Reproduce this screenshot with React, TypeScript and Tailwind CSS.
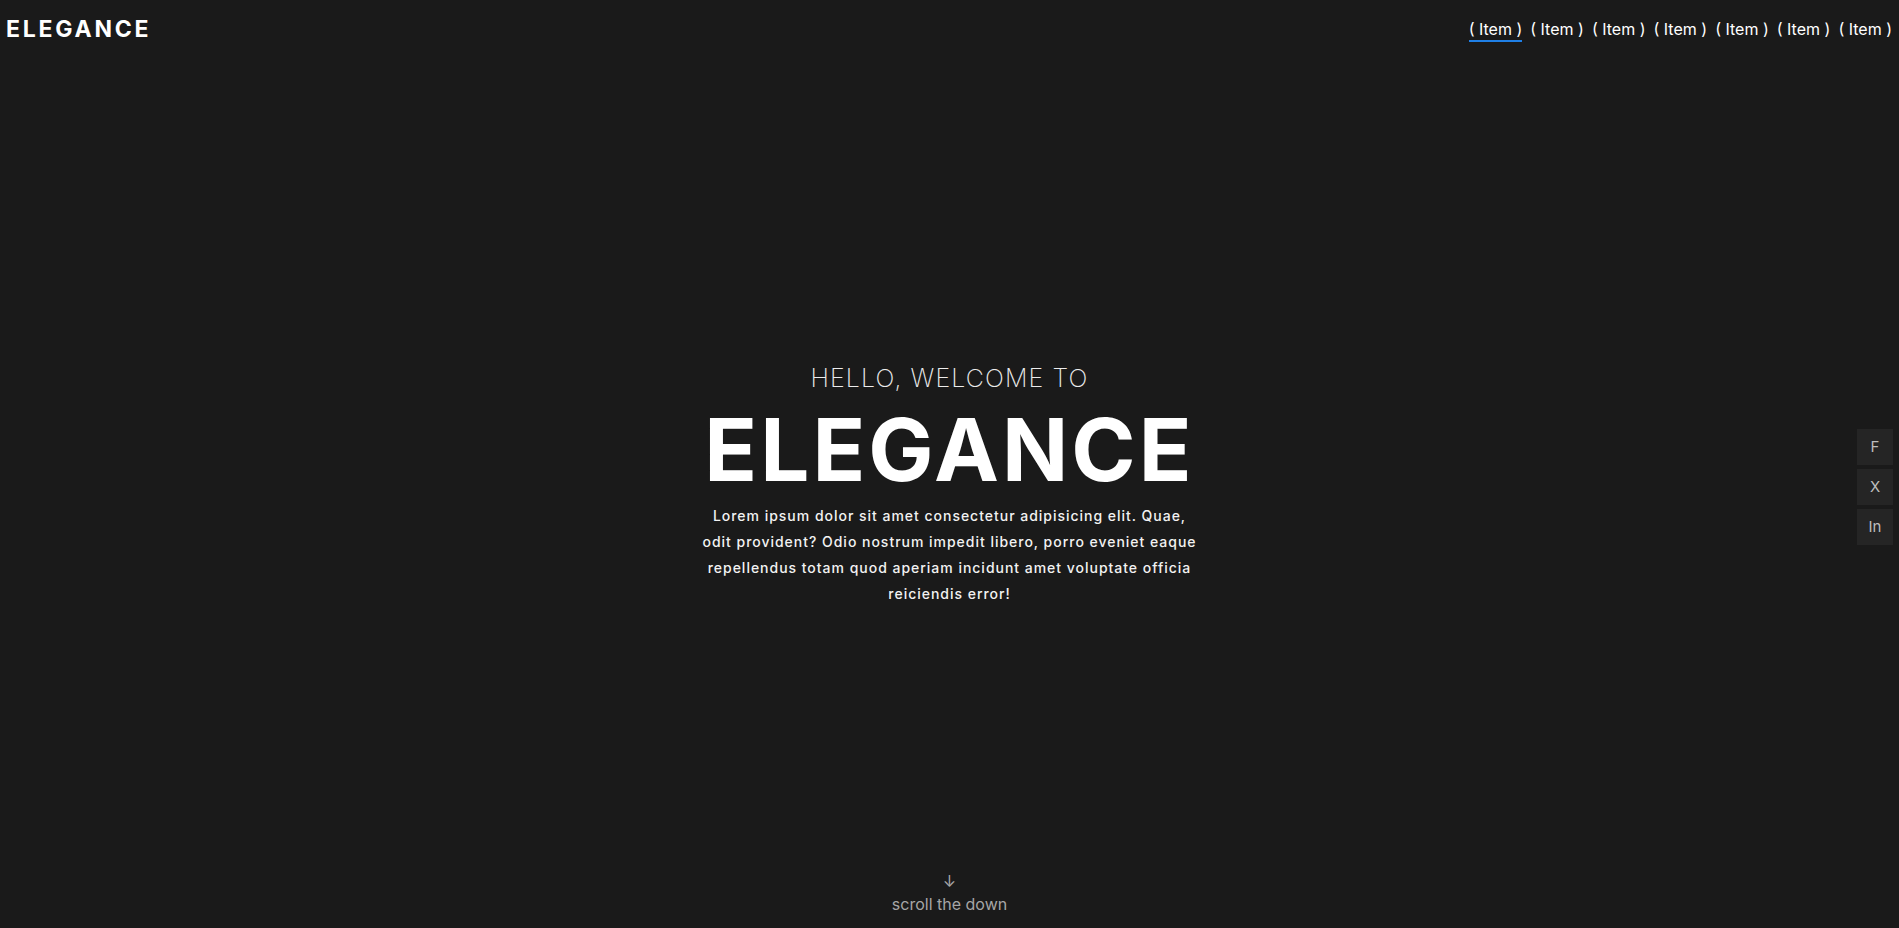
const navItems = ["Item", "Item", "Item", "Item", "Item", "Item", "Item"];

export default function App() {
  return (
    <div className="relative flex h-screen flex-col bg-[#1a1a1a] font-['Inter','Liberation_Sans',sans-serif] text-white">
      {/* Header */}
      <header className="flex h-[60px] items-start justify-between pt-[15px] pr-[7px] pl-[6px]">
        <h1 className="text-[23px] leading-[28px] font-bold tracking-[0.12em]">ELEGANCE</h1>
        <nav className="flex gap-[8px] pt-[4px]">
          {navItems.map((item, i) => (
            <a
              key={i}
              href="#"
              className={
                i === 0
                  ? "border-b-2 border-[#1f7fe6] pb-[1px] text-[16px] leading-[20px] whitespace-pre"
                  : "border-b-2 border-transparent pb-[1px] text-[16px] leading-[20px] whitespace-pre"
              }
            >
              {"( " + item + " )"}
            </a>
          ))}
        </nav>
      </header>

      {/* Hero */}
      <main className="flex flex-1 flex-col items-center justify-center pt-[37px]">
        <p className="text-[25px] leading-[32px] font-extralight tracking-[0.045em] text-[#ececec]">
          HELLO, WELCOME TO
        </p>
        <h2 className="mt-[11px] text-[87px] leading-[90px] font-bold tracking-[0.035em]">ELEGANCE</h2>
        <p className="mt-[8px] max-w-[496px] text-center text-[14px] leading-[26px] font-medium tracking-[0.07em] text-[#f2f2f2]">
          Lorem ipsum dolor sit amet consectetur adipisicing elit. Quae, odit provident? Odio nostrum
          impedit libero, porro eveniet eaque repellendus totam quod aperiam incidunt amet voluptate
          officia reiciendis error!
        </p>
      </main>

      {/* Scroll hint */}
      <div className="flex flex-col items-center pb-[14px] text-[#a6a6a6]">
        <span className="text-[16px] leading-[20px]">↓</span>
        <span className="mt-[3px] text-[16px] leading-[20px]">scroll the down</span>
      </div>

      {/* Social links */}
      <div className="absolute top-[429px] right-[6px] flex flex-col gap-[4px]">
        {["F", "X", "In"].map((s) => (
          <a
            key={s}
            href="#"
            className="flex h-[36px] w-[36px] items-center justify-center bg-[#252525] text-[15px] text-[#bdbdbd]"
          >
            {s}
          </a>
        ))}
      </div>
    </div>
  );
}
